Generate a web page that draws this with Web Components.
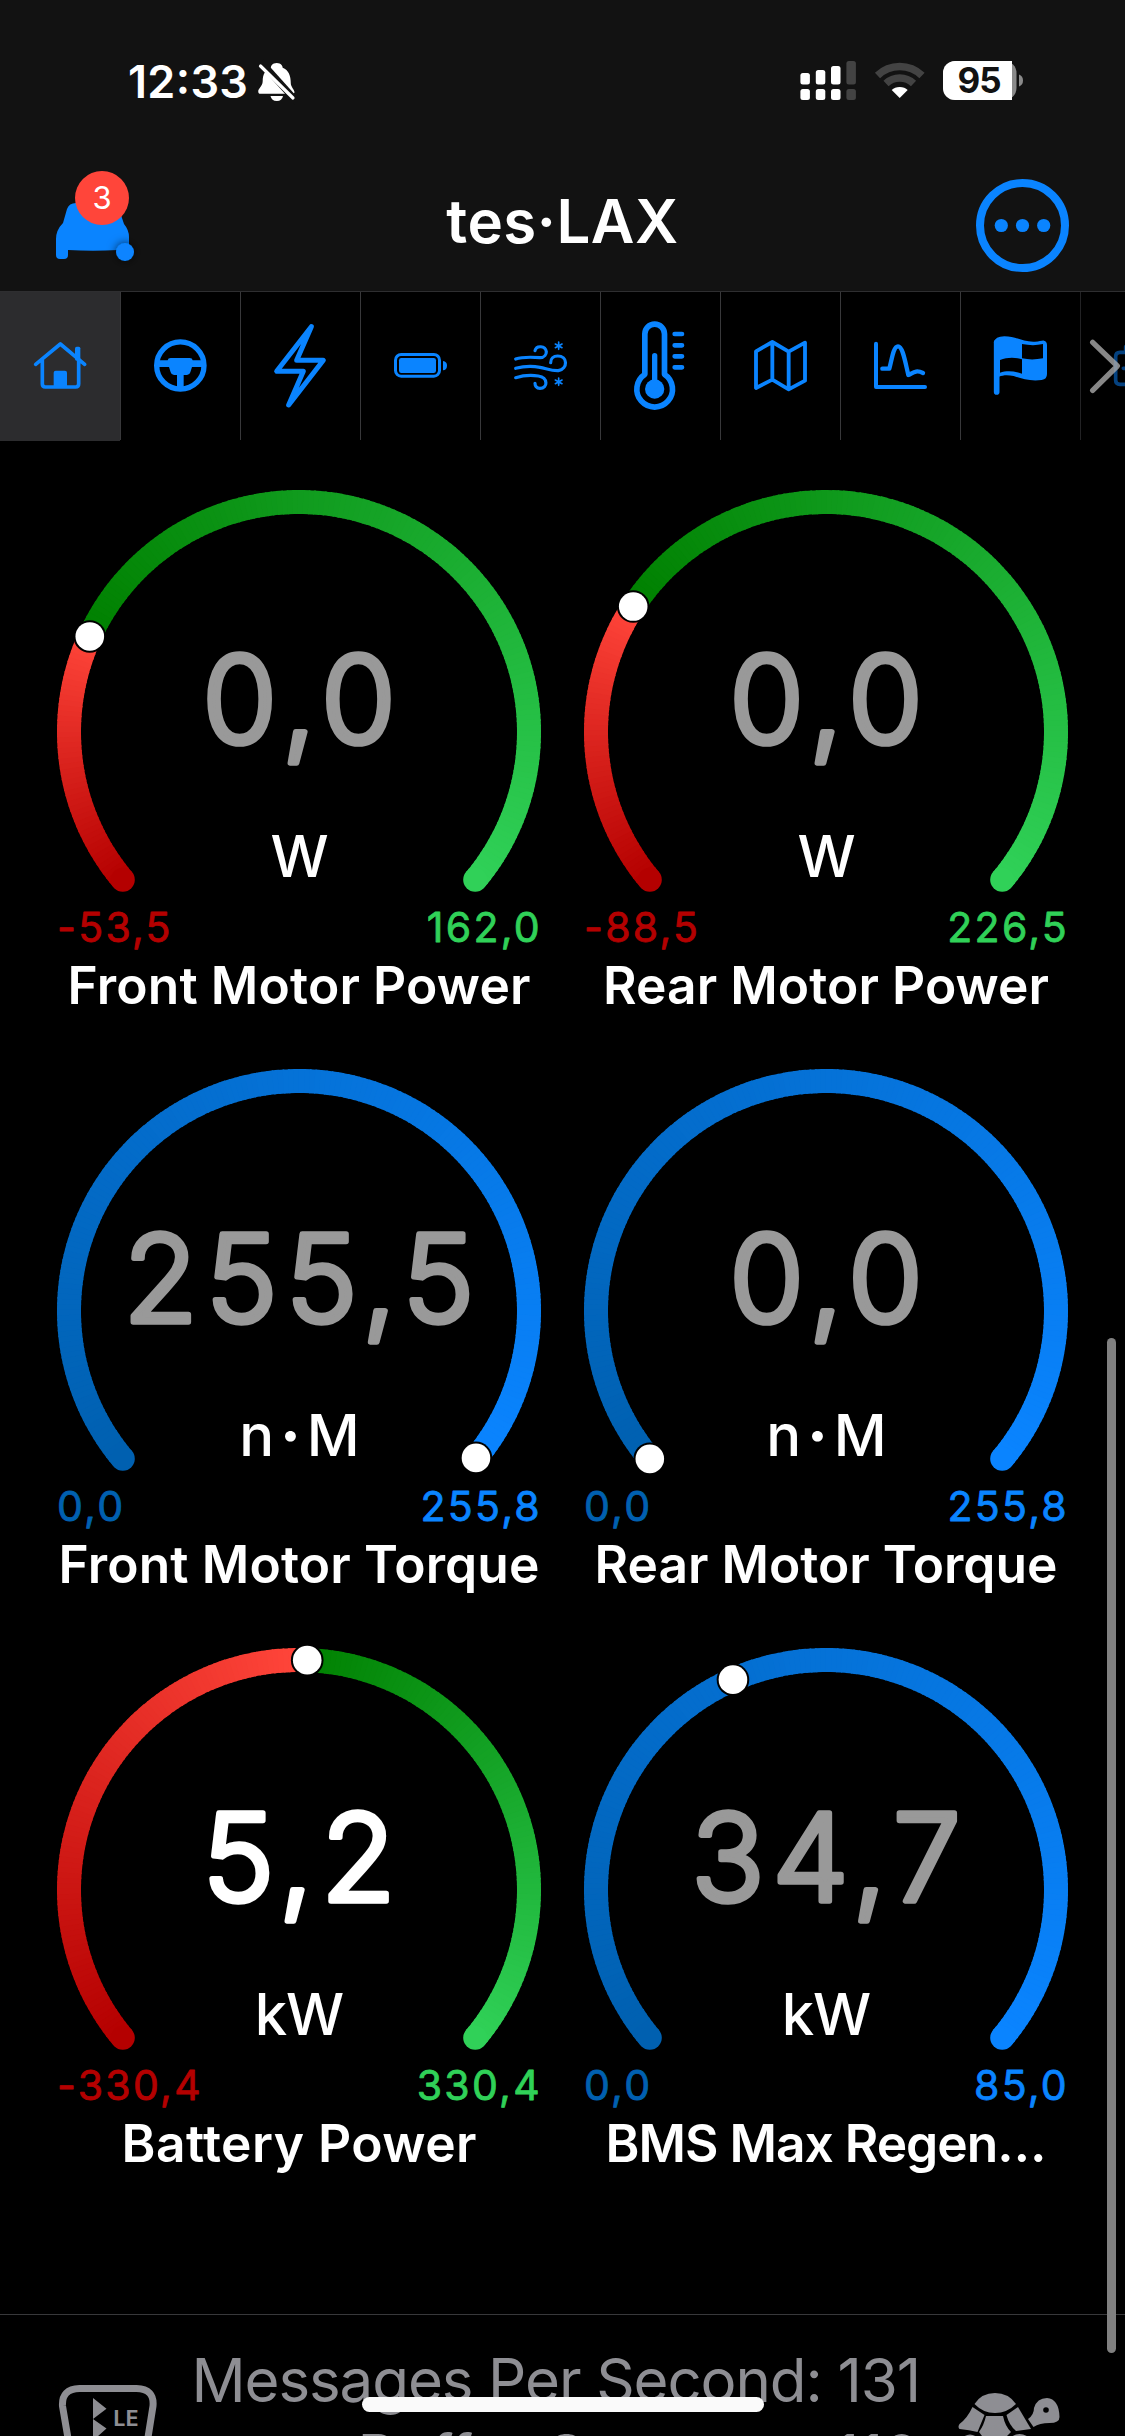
<!DOCTYPE html>
<html lang="en">
<head>
<meta charset="utf-8">
<title>tes·LAX</title>
<style>
    :root {
        --blue: #0a84ff;
        --bar: #121212;
        --line: #38383a;
        --muted: #8e8e93;
    }

    body {
        margin: 0;
        width: 1125px;
        height: 2436px;
        overflow: hidden;
        position: relative;
        display: flex;
        flex-direction: column;
        background: #000;
        color: #fff;
        font-family: Inter, "Liberation Sans", sans-serif;
    }

    main {
        display: grid;
        grid-template-columns: 484px 484px;
        grid-auto-rows: 579px;
        column-gap: 43px;
        padding: 49px 57px 0;
        flex: 1;
    }

    .scrollbar {
        position: absolute;
        left: 1107px;
        top: 1338px;
        width: 9px;
        height: 1015px;
        border-radius: 5px;
        background: #808080;
    }

    .home-indicator {
        position: absolute;
        left: 362px;
        top: 2397px;
        width: 402px;
        height: 15px;
        border-radius: 8px;
        background: #fafafa;
    }
</style>
</head>
<body>
    <status-bar time="12:33" battery="95"></status-bar>
    <nav-header badge="3">tes·LAX</nav-header>
    <tab-bar>
        <tab-item icon="home" selected></tab-item>
        <tab-item icon="wheel"></tab-item>
        <tab-item icon="bolt"></tab-item>
        <tab-item icon="battery"></tab-item>
        <tab-item icon="wind"></tab-item>
        <tab-item icon="thermometer"></tab-item>
        <tab-item icon="map"></tab-item>
        <tab-item icon="chart"></tab-item>
        <tab-item icon="flag"></tab-item>
        <tab-item icon="more"></tab-item>
    </tab-bar>
    <main>
        <dial-gauge value="0,0" unit="W" min="-53,5" max="162,0" label="Front Motor Power" label-width="463" dim></dial-gauge>
        <dial-gauge value="0,0" unit="W" min="-88,5" max="226,5" label="Rear Motor Power" label-width="446" dim></dial-gauge>
        <dial-gauge value="255,5" unit="n·M" min="0,0" max="255,8" label="Front Motor Torque" label-width="481" dim></dial-gauge>
        <dial-gauge value="0,0" unit="n·M" min="0,0" max="255,8" label="Rear Motor Torque" label-width="463" dim></dial-gauge>
        <dial-gauge value="5,2" unit="kW" min="-330,4" max="330,4" label="Battery Power" label-width="355"></dial-gauge>
        <dial-gauge value="34,7" unit="kW" min="0,0" max="85,0" label="BMS Max Regen…" label-width="441" dim></dial-gauge>
    </main>
    <stats-footer>
        <span>Messages Per Second: 131</span>
        <span slot="second">Buffer Overruns: 110</span>
    </stats-footer>
    <div class="scrollbar"></div>
    <div class="home-indicator"></div>

<script>
class StatusBar extends HTMLElement {
    constructor() {
        super();
        this.attachShadow({ mode: 'open' });
    }

    connectedCallback() {
        this.shadowRoot.innerHTML = `
            <style>
                :host {
                    display: flex;
                    justify-content: space-between;
                    height: 162px;
                    background: var(--bar);
                }

                svg { display: block; }
            </style>
            <svg width="400" height="162" viewBox="0 0 400 162">
                <text x="128" y="98" font-size="45" font-weight="600" fill="#fff" textLength="120">${this.getAttribute('time')}</text>
                <g fill="#fff">
                    <path d="M276 62c6 0 8 4 8 6 8 3 11 10 11 20 0 4 5 8 5 11 0 1-1 2-3 2h-43c-2 0-3-1-3-3 0-4 6-7 6-13 0-9 4-15 11-17 0-2 2-6 8-6z" transform="translate(72.5 14) scale(.74 .79)"/>
                    <path d="M270.500 96h12.500q-1 5-6.200 5t-6.300-5z"/>
                </g>
                <path d="M261 62l36 40" stroke="#121212" stroke-width="7"/>
                <path d="M260.500 66l32.500 32" stroke="#fff" stroke-width="3.200" stroke-linecap="round"/>
            </svg>
            <svg width="340" height="162" viewBox="785 0 340 162">
                <g fill="#fff">
                    <rect x="800.400" y="73" width="9.500" height="11.500" rx="2.500"/>
                    <rect x="815.800" y="70" width="9.500" height="14.500" rx="2.500"/>
                    <rect x="831" y="66" width="9.500" height="18.500" rx="2.500"/>
                    <rect x="800.400" y="89" width="9.500" height="11" rx="2.500"/>
                    <rect x="815.800" y="89" width="9.500" height="11" rx="2.500"/>
                    <rect x="831" y="89" width="9.500" height="11" rx="2.500"/>
                </g>
                <g fill="#434343">
                    <rect x="846.400" y="61" width="9.500" height="23.500" rx="2.500"/>
                    <rect x="846.400" y="89" width="9.500" height="11" rx="2.500"/>
                </g>
                <g fill="none" stroke="#434343" stroke-width="7.500">
                    <path d="M877.500 75.500a32 32 0 0 1 44.500 0"/>
                    <path d="M886 83.500a20 20 0 0 1 27.500 0"/>
                </g>
                <path d="M899.700 98l-8-8q3-3 8-3t8 3z" fill="#fff"/>
                <rect x="943" y="61" width="73.500" height="39" rx="12" fill="#8a8a8a"/>
                <path d="M955 61h57v39h-57a12 12 0 0 1-12-12v-15a12 12 0 0 1 12-12z" fill="#fff"/>
                <path d="M1019 74.500q4 1.500 4 6t-4 6z" fill="#8a8a8a"/>
                <text x="979.500" y="93" text-anchor="middle" font-size="35" font-weight="700" fill="#121212" textLength="44">${this.getAttribute('battery')}</text>
            </svg>
        `;
    }
}

class NavHeader extends HTMLElement {
    constructor() {
        super();
        this.attachShadow({ mode: 'open' });
    }

    connectedCallback() {
        this.shadowRoot.innerHTML = `
            <style>
                :host {
                    display: grid;
                    grid-template-columns: 200px 1fr 200px;
                    height: 129px;
                    background: var(--bar);
                    border-bottom: 1px solid #2e2e30;
                }

                svg { display: block; }

                h1 {
                    margin: 0;
                    padding-top: 22px;
                    font-size: 60px;
                    line-height: 74px;
                    font-weight: 600;
                    letter-spacing: .5px;
                    text-align: center;
                }
            </style>
            <svg width="200" height="129" viewBox="0 162 200 129">
                <defs>
                    <filter id="shade" x="-1" y="-1" width="3" height="3">
                        <feDropShadow dx="0" dy="0" stdDeviation="5" flood-color="#000" flood-opacity=".7"/>
                    </filter>
                </defs>
                <path d="M76 203q-7 0-9 6l-4 14q-7 7-7 16v16q0 4 4 4h4q4 0 4-4v-5q25 1.500 50 0 11 0 11-5v-8q0-7-5-13l-5-15q-2-6-9-6z" fill="var(--blue)"/>
                <circle cx="102" cy="198" r="27" fill="#ff453a"/>
                <text x="102" y="209" text-anchor="middle" font-size="31" fill="#fff">${this.getAttribute('badge')}</text>
                <circle cx="125" cy="252" r="9" fill="var(--blue)" filter="url(#shade)"/>
            </svg>
            <h1><slot></slot></h1>
            <svg width="200" height="129" viewBox="925 162 200 129">
                <circle cx="1022.500" cy="225.500" r="42.500" fill="none" stroke="var(--blue)" stroke-width="8"/>
                <g fill="var(--blue)">
                    <circle cx="1001.300" cy="225.500" r="6.600"/>
                    <circle cx="1022.500" cy="225.500" r="6.600"/>
                    <circle cx="1043.700" cy="225.500" r="6.600"/>
                </g>
            </svg>
        `;
    }
}

class TabBar extends HTMLElement {
    constructor() {
        super();
        this.attachShadow({ mode: 'open' });
        this.shadowRoot.innerHTML = `
            <style>
                :host {
                    display: flex;
                    height: 149px;
                    overflow: hidden;
                }
            </style>
            <slot></slot>
        `;
    }
}

// Icons share a 360x444 canvas, three units per pixel of a tab
const ICONS = {
    home: `
        <path d="M107 238L181 177l73 61M127 226v71q0 9 9 9h91q9 0 9-9v-71" stroke-width="11"/>
        <rect class="fill" x="225" y="185" width="16" height="42" rx="5"/>
        <rect class="fill" x="161" y="257" width="40" height="50" rx="6"/>`,
    wheel: `
        <circle cx="181" cy="241.500" r="71" stroke-width="16"/>
        <path class="fill" d="M112 226h31q1-7 9-7h57q8 0 9 7h32v20h-34l-5 16q-2 8-10 8h-10v42h-20v-42h-9q-8 0-10-8l-5-16h-35z"/>`,
    bolt: `<path d="M214 125L110 259h80l-44 101L250 226h-80z" stroke-width="15"/>`,
    battery: `
        <rect x="106.500" y="208.500" width="132" height="65" rx="17" stroke-width="9"/>
        <rect class="fill" x="117" y="219" width="111" height="45" rx="7"/>
        <path class="fill" d="M249 228q12 2 12 14t-12 14z"/>`,
    wind: `
        <g stroke-width="9.500">
            <path d="M107 222c18-6 45-6 73-4 14 0 19-11 19-18-3-18-30-20-34-3"/>
            <path d="M107 250c23-6 45-8 73-3 20 4 35 11 55 10 30-7 28-44-2-44-13 0-21 9-21 20"/>
            <path d="M107 278c23-7 48-8 68-5 30 5 29 37 5 37-11 0-15-8-15-15"/>
        </g>
        <path d="M236 171v22m-10-16l20 11m0-11l-20 11M236 279v22m-10-16l20 11m0-11l-20 11" stroke-width="5"/>`,
    thermometer: `
        <path d="M134.500 268V147a29.500 29.500 0 0 1 59 0v121a53.500 53.500 0 1 1-59 0z" stroke-width="17"/>
        <circle class="fill" cx="164" cy="312" r="29"/>
        <path d="M164 212v90" stroke-width="16"/>
        <path d="M224 147h22M224 181h22M224 214h22M224 247h22" stroke-width="14"/>`,
    map: `<path d="M108 199l49-28 49 29 49-27v114l-49 26-49-29-49 25zM157 171v113M206 200v113" stroke-width="11.500"/>`,
    chart: `
        <path d="M108 176v130h147" stroke-width="12"/>
        <path d="M127 251h21c8-30 12-67 26-67s21 44 31 86c14-6 22-17 44-6" stroke-width="13"/>`,
    flag: `
        <path d="M110 172v149" stroke-width="17"/>
        <path class="fill" fill-rule="evenodd" d="M102 172q3-18 31-18c37 0 57 18 92 16 14 0 20-4 27-3q9 2 9 13v87q0 16-16 18c-35 5-62-5-84-12-18-4-32-3-44 2zM186 177v43c22 5 42 4 63 0v-43c-22 5-42 4-63 0zM120 225v38c20-7 45-5 66 3v-43c-22-7-45-6-66 2z"/>`,
    more: `
        <g opacity=".5">
            <path d="M145 202h-25q-13 0-13 13v71q0 12 13 12h25M130 250h15M137 185v15" stroke-width="11"/>
        </g>
        <path d="M38 172l74 71-74 73" stroke="#a9a9a9" stroke-opacity=".8" stroke-width="16"/>`
};

class TabItem extends HTMLElement {
    constructor() {
        super();
        this.attachShadow({ mode: 'open' });
    }

    connectedCallback() {
        this.shadowRoot.innerHTML = `
            <style>
                :host {
                    display: block;
                    flex: 0 0 120px;
                    height: 148px;
                    box-shadow: inset 1px 0 var(--line);
                }

                :host([icon="more"]) { box-shadow: inset 1px 0 #222224; }

                :host([selected]) {
                    height: 149px;
                    background: #2c2c2e;
                    box-shadow: none;
                }

                svg {
                    display: block;
                    fill: none;
                    stroke: var(--blue);
                    stroke-linecap: round;
                    stroke-linejoin: round;
                }

                .fill {
                    fill: var(--blue);
                    stroke: none;
                }
            </style>
            <svg width="120" height="148" viewBox="0 21 360 444">${ICONS[this.getAttribute('icon')]}</svg>
        `;
    }
}

const START = 140;
const SWEEP = 260;
const RADIUS = 230;
const CENTER = 242;

const toNumber = (text) => parseFloat(text.replace(',', '.'));

const pointAt = (fraction) => {
    const angle = (START + SWEEP * fraction) * Math.PI / 180;
    return [CENTER + RADIUS * Math.cos(angle), CENTER + RADIUS * Math.sin(angle)];
};

// Short overlapping arcs give a gradient that follows the ring
const gradientArc = (from, to, startColor, endColor) => {
    const steps = Math.max(2, Math.round((to - from) * 200));
    let arcs = '';
    for (let i = 0; i < steps; i++) {
        const a = from + (to - from) * i / steps;
        const b = Math.min(to, from + (to - from) * (i + 1.3) / steps);
        const mix = i / (steps - 1);
        const color = startColor.map((c, n) => Math.round(c + (endColor[n] - c) * mix));
        arcs += `<path d="M${pointAt(a)}A${RADIUS} ${RADIUS} 0 0 1 ${pointAt(b)}" stroke="rgb(${color})"/>`;
    }
    return arcs;
};

const cap = (fraction, color) => {
    const [x, y] = pointAt(fraction);
    return `<circle cx="${x}" cy="${y}" r="12" fill="rgb(${color})"/>`;
};

class DialGauge extends HTMLElement {
    constructor() {
        super();
        this.attachShadow({ mode: 'open' });
    }

    connectedCallback() {
        this.render();
    }

    render() {
        const value = this.getAttribute('value');
        const unit = this.getAttribute('unit').replace('·', '<tspan class="dot" dx="7">·</tspan><tspan dx="7"></tspan>');
        const minText = this.getAttribute('min');
        const maxText = this.getAttribute('max');
        const min = toNumber(minText);
        const max = toNumber(maxText);
        const signed = min < 0;
        const zero = -min / (max - min);
        const low = signed ? [180, 0, 0] : [0, 96, 176];
        const high = signed ? [48, 209, 88] : [10, 132, 255];
        const arcs = signed
            ? gradientArc(0, zero, low, [255, 69, 58]) + gradientArc(zero, 1, [0, 128, 0], high)
            : gradientArc(0, 1, low, high);
        const [knobX, knobY] = pointAt((toNumber(value) - min) / (max - min));

        this.shadowRoot.innerHTML = `
            <style>
                :host { display: block; }

                svg {
                    display: block;
                    overflow: visible;
                }

                text {
                    fill: #fff;
                    stroke-linejoin: round;
                }

                .value {
                    font-size: 121px;
                    font-weight: 300;
                    letter-spacing: 8px;
                    stroke: #fff;
                    stroke-width: 5.5px;
                }

                :host([dim]) .value {
                    fill: #999;
                    stroke: #999;
                }

                .unit {
                    font-size: 58px;
                    font-weight: 500;
                    letter-spacing: -1px;
                }

                .dot {
                    font-weight: 800;
                    letter-spacing: 6px;
                }

                .range {
                    font-size: 41px;
                    letter-spacing: 2.3px;
                    stroke-width: .8px;
                }

                .label {
                    font-size: 51.5px;
                    font-weight: 600;
                }
            </style>
            <svg width="484" height="545" viewBox="0 0 484 545">
                <g fill="none" stroke-width="24">${arcs}</g>
                ${cap(0, low)}
                ${cap(1, high)}
                <circle cx="${knobX}" cy="${knobY}" r="16.300" fill="#000"/>
                <circle cx="${knobX}" cy="${knobY}" r="14.300" fill="#fff"/>
                <text class="value" x="246" y="252.500" text-anchor="middle">${value}</text>
                <text class="unit" x="242" y="387" text-anchor="middle">${unit}</text>
                <text class="range" x="0" y="452" style="fill: rgb(${low}); stroke: rgb(${low})">${minText}</text>
                <text class="range" x="485" y="452" text-anchor="end" style="fill: rgb(${high}); stroke: rgb(${high})">${maxText}</text>
                <text class="label" x="242" y="514" text-anchor="middle" textLength="${this.getAttribute('label-width')}">${this.getAttribute('label')}</text>
            </svg>
        `;
    }
}

class StatsFooter extends HTMLElement {
    constructor() {
        super();
        this.attachShadow({ mode: 'open' });
        this.shadowRoot.innerHTML = `
            <style>
                :host {
                    display: grid;
                    grid-template-columns: 197px 723px 205px;
                    height: 121px;
                    overflow: hidden;
                    border-top: 1px solid var(--line);
                    color: var(--muted);
                    font-size: 60px;
                    line-height: 76px;
                }

                .lines {
                    display: flex;
                    flex-direction: column;
                    align-items: flex-end;
                    padding-top: 27px;
                    letter-spacing: -1.1px;
                    white-space: nowrap;
                }

                slot[name="second"] {
                    display: block;
                    letter-spacing: -.5px;
                }

                svg {
                    display: block;
                    fill: var(--muted);
                }
            </style>
            <svg width="197" height="121" viewBox="0 2315 197 121">
                <path d="M70 2450l-7.500-44q-1-17 17-17.500h57q18 .5 16.500 17.500l-7 44" fill="none" stroke="var(--muted)" stroke-width="7"/>
                <path d="M93 2398l13.500 10.700-13.500 10.300 13.500 9.500-13.500 12z"/>
                <text x="113.500" y="2426" font-size="21" font-weight="700" textLength="25">LE</text>
            </svg>
            <div class="lines">
                <slot></slot>
                <slot name="second"></slot>
            </div>
            <svg width="205" height="121" viewBox="920 2315 205 121">
                <path d="M974.500 2404q7-11 20.500-11t21 11q-9 9-21 9t-20.500-9z"/>
                <path d="M972.500 2407l12 8-7 17q-8-2-18-3-2-2 0-5 8-6 13-17z"/>
                <path d="M986 2416h17q2 10 8 16l-8 8h-18l-6-8q5-7 7-16z"/>
                <path d="M1006.500 2415l11.500-8 13 22-15 2q-7-6-9.500-16z"/>
                <path d="M1028 2419q6-4 6-11 3-10 13-10 12 1 12.500 19 0 6-10 6-10 0-16 4z"/>
                <circle cx="1046" cy="2410" r="2.800" fill="#000"/>
                <path d="M962 2438q8-7 16 0zM1010 2438q9-8 20 0z"/>
            </svg>
        `;
    }
}

customElements.define('status-bar', StatusBar);
customElements.define('nav-header', NavHeader);
customElements.define('tab-bar', TabBar);
customElements.define('tab-item', TabItem);
customElements.define('dial-gauge', DialGauge);
customElements.define('stats-footer', StatsFooter);
</script>
</body>
</html>
